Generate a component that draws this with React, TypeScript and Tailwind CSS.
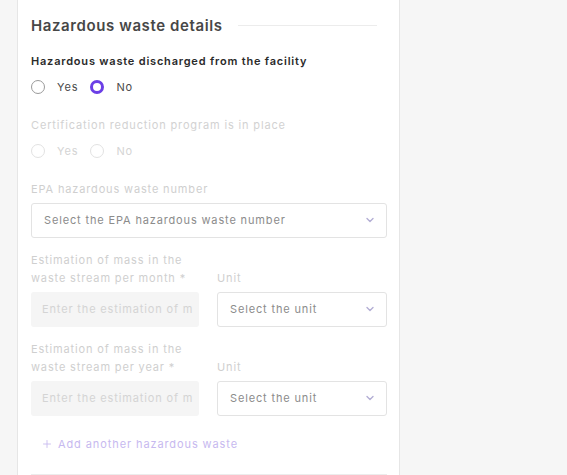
import { ChevronDown, Plus } from 'lucide-react'

// ─── Small pieces ────────────────────────────────────────────────────────────

function Radio({ label, checked, disabled }: { label: string; checked?: boolean; disabled?: boolean }) {
  return (
    <label className="flex items-center gap-[12px]">
      <span
        className={
          checked
            ? 'h-[14px] w-[14px] rounded-full border-[3px] border-[#6b3fe6] bg-white'
            : disabled
              ? 'h-[14px] w-[14px] rounded-full border border-[#e2e2e2] bg-white'
              : 'h-[14px] w-[14px] rounded-full border border-[#9a9a9a] bg-white'
        }
      />
      <span
        className={
          disabled
            ? 'text-[11px] tracking-[0.85px] text-[#d4d4d4]'
            : 'text-[11px] tracking-[0.85px] text-[#4a4a4a]'
        }
      >
        {label}
      </span>
    </label>
  )
}

function SelectBox({ placeholder }: { placeholder: string }) {
  return (
    <div className="flex h-[35px] items-center justify-between rounded-[3px] border border-[#e3e3e3] bg-white pl-[12px] pr-[10px]">
      <span className="whitespace-nowrap text-[11px] tracking-[0.85px] text-[#8c8c8c]">{placeholder}</span>
      <ChevronDown className="h-[12px] w-[12px] shrink-0 text-[#b3aed4]" strokeWidth={2.75} />
    </div>
  )
}

function MassRow({ period }: { period: string }) {
  return (
    <div className="grid grid-cols-[168px_1fr] gap-x-[18px]">
      <div className="flex flex-col">
        <p className="text-[11px] leading-[18px] tracking-[0.85px] text-[#cfcfcf]">
          Estimation of mass in the
          <br />
          waste stream per {period} *
        </p>
        <div className="mt-[5px] flex h-[35px] items-center overflow-hidden whitespace-nowrap rounded-[3px] bg-[#f5f5f5] pl-[11px]">
          <span className="text-[11px] tracking-[0.85px] text-[#d4d4d4]">Enter the estimation of m</span>
        </div>
      </div>
      <div className="flex flex-col justify-end">
        <p className="text-[11px] leading-[18px] tracking-[0.85px] text-[#cfcfcf]">Unit</p>
        <div className="mt-[5px]">
          <SelectBox placeholder="Select the unit" />
        </div>
      </div>
    </div>
  )
}

// ─── Main ────────────────────────────────────────────────────────────────────

export default function App() {
  return (
    <div
      className="flex h-[475px] w-full overflow-hidden bg-[#f6f6f6]"
      style={{ fontFamily: 'Inter, "Noto Sans", sans-serif' }}
    >
      <div className="w-[17px] shrink-0" />
      <section className="w-[383px] shrink-0 border-x border-[#e6e6e6] bg-white pl-[13px] pr-[12px] pt-[15px]">
        {/* Title */}
        <div className="flex items-center pr-[10px]">
          <h2 className="text-[15px] font-semibold leading-[21px] tracking-[0.6px] text-[#474747]">
            Hazardous waste details
          </h2>
          <div className="ml-[15px] h-px flex-1 bg-[#ececec]" />
        </div>

        {/* Discharged */}
        <p className="mt-[17px] text-[11px] font-semibold tracking-[0.8px] text-[#2a2a2a]">
          Hazardous waste discharged from the facility
        </p>
        <div className="mt-[9px] flex items-center gap-[12px]">
          <Radio label="Yes" />
          <Radio label="No" checked />
        </div>

        {/* Certification */}
        <p className="mt-[22px] text-[11px] tracking-[0.85px] text-[#d2d2d2]">
          Certification reduction program is in place
        </p>
        <div className="mt-[9px] flex items-center gap-[12px]">
          <Radio label="Yes" disabled />
          <Radio label="No" disabled />
        </div>

        {/* EPA number */}
        <p className="mt-[22px] text-[11px] tracking-[0.85px] text-[#cfcfcf]">EPA hazardous waste number</p>
        <div className="mt-[5px]">
          <SelectBox placeholder="Select the EPA hazardous waste number" />
        </div>

        <div className="mt-[13px]">
          <MassRow period="month" />
        </div>
        <div className="mt-[13px]">
          <MassRow period="year" />
        </div>

        <button
          type="button"
          className="mt-[20px] flex items-center gap-[5px] pl-[10px] text-[11px] tracking-[0.9px] text-[#c7b9ef]"
        >
          <Plus className="h-[12px] w-[12px]" strokeWidth={1.75} />
          Add another hazardous waste
        </button>

        <div className="mt-[22px] h-px bg-[#ececec]" />
      </section>
    </div>
  )
}
